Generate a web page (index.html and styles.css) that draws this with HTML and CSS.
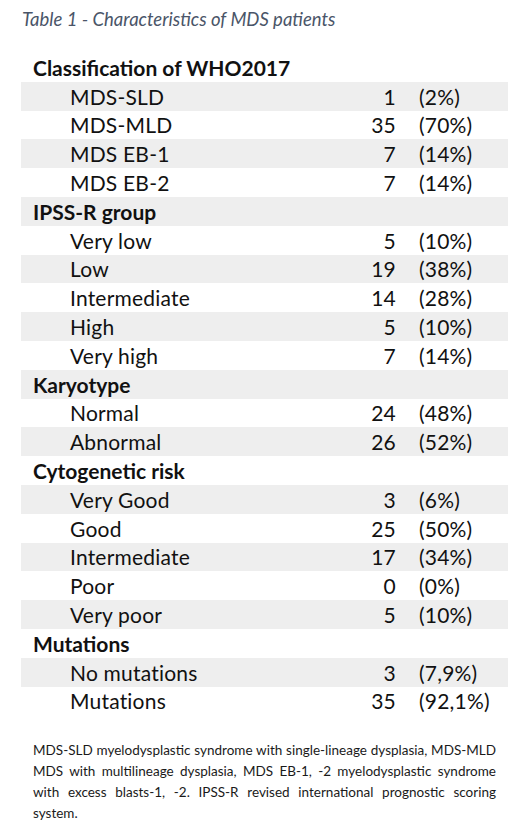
FILE: index.html
```html
<!DOCTYPE html>
<html>
<head>
<meta charset="utf-8">
<link rel="stylesheet" href="styles.css">
</head>
<body>
<div class="page">
  <div class="caption">Table 1 - Characteristics of MDS patients</div>
  <div class="table">
    <div class="row head"><span class="label">Classification of WHO2017</span><span class="num"></span><span class="pct"></span></div>
    <div class="row shade"><span class="label sub">MDS-SLD</span><span class="num">1</span><span class="pct">(2%)</span></div>
    <div class="row"><span class="label sub">MDS-MLD</span><span class="num">35</span><span class="pct">(70%)</span></div>
    <div class="row shade"><span class="label sub">MDS EB-1</span><span class="num">7</span><span class="pct">(14%)</span></div>
    <div class="row"><span class="label sub">MDS EB-2</span><span class="num">7</span><span class="pct">(14%)</span></div>
    <div class="row head shade"><span class="label">IPSS-R group</span><span class="num"></span><span class="pct"></span></div>
    <div class="row"><span class="label sub">Very low</span><span class="num">5</span><span class="pct">(10%)</span></div>
    <div class="row shade"><span class="label sub">Low</span><span class="num">19</span><span class="pct">(38%)</span></div>
    <div class="row"><span class="label sub">Intermediate</span><span class="num">14</span><span class="pct">(28%)</span></div>
    <div class="row shade"><span class="label sub">High</span><span class="num">5</span><span class="pct">(10%)</span></div>
    <div class="row"><span class="label sub">Very high</span><span class="num">7</span><span class="pct">(14%)</span></div>
    <div class="row head shade"><span class="label">Karyotype</span><span class="num"></span><span class="pct"></span></div>
    <div class="row"><span class="label sub">Normal</span><span class="num">24</span><span class="pct">(48%)</span></div>
    <div class="row shade"><span class="label sub">Abnormal</span><span class="num">26</span><span class="pct">(52%)</span></div>
    <div class="row head"><span class="label">Cytogenetic risk</span><span class="num"></span><span class="pct"></span></div>
    <div class="row shade"><span class="label sub">Very Good</span><span class="num">3</span><span class="pct">(6%)</span></div>
    <div class="row"><span class="label sub">Good</span><span class="num">25</span><span class="pct">(50%)</span></div>
    <div class="row shade"><span class="label sub">Intermediate</span><span class="num">17</span><span class="pct">(34%)</span></div>
    <div class="row"><span class="label sub">Poor</span><span class="num">0</span><span class="pct">(0%)</span></div>
    <div class="row shade"><span class="label sub">Very poor</span><span class="num">5</span><span class="pct">(10%)</span></div>
    <div class="row head"><span class="label">Mutations</span><span class="num"></span><span class="pct"></span></div>
    <div class="row shade"><span class="label sub">No mutations</span><span class="num">3</span><span class="pct">(7,9%)</span></div>
    <div class="row"><span class="label sub">Mutations</span><span class="num">35</span><span class="pct">(92,1%)</span></div>
  </div>
  <p class="note">MDS-SLD myelodysplastic syndrome with single-lineage dysplasia, MDS-MLD MDS with multilineage dysplasia, MDS EB-1, -2 myelodysplastic syndrome with excess blasts-1, -2. IPSS-R revised international prognostic scoring system.</p>
</div>
</body>
</html>
```
FILE: styles.css
```css
html, body {
  margin: 0;
  padding: 0;
  background: #ffffff;
}
.page {
  width: 520px;
  height: 830px;
  font-family: Lato, "Liberation Sans", sans-serif;
  color: #111111;
}
.caption {
  padding: 8px 0 0 22px;
  height: 53px;
  box-sizing: border-box;
  font-style: italic;
  font-size: 18.5px;
  color: #4a5568;
}
.table {
  margin-left: 21px;
  width: 487px;
}
.row {
  display: grid;
  grid-template-columns: 1fr 58px 112px;
  height: 28.8px;
  align-items: center;
  font-size: 21px;
  letter-spacing: 0.2px;
}
.row.shade {
  background: #eeeeee;
}
.label {
  padding-left: 12px;
}
.label.sub {
  padding-left: 49px;
}
.head .label {
  font-weight: bold;
  letter-spacing: 0;
}
.num {
  text-align: right;
}
.pct {
  padding-left: 23px;
}
.note {
  margin: 25px 0 0 33px;
  width: 463px;
  font-size: 13.5px;
  line-height: 21px;
  text-align: justify;
  color: #1a1a1a;
}
```
